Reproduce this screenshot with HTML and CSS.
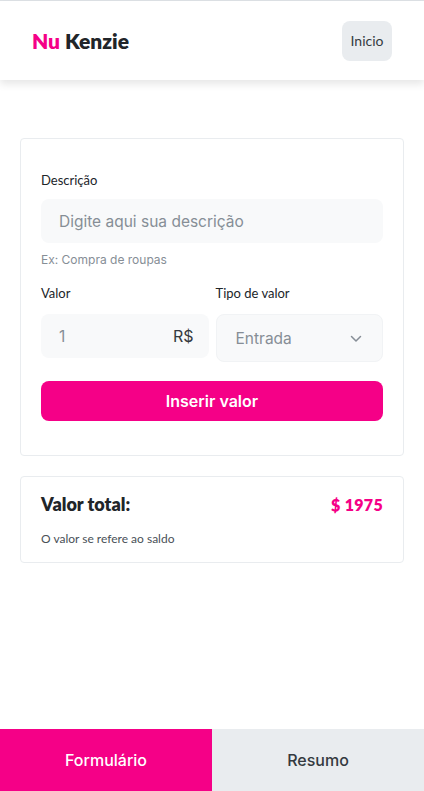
FILE: index.html
```html
<!DOCTYPE html>
<html lang="pt-BR">
<head>
<meta charset="utf-8">
<title>Nu Kenzie</title>
<link rel="stylesheet" href="styles.css">
</head>
<body>
<div class="page">
  <header class="header">
    <h1 class="logo"><span class="logo-nu">Nu</span> Kenzie</h1>
    <button class="btn-home">Inicio</button>
  </header>
  <main class="main">
    <form class="card form-card">
      <label class="label" for="desc">Descrição</label>
      <div class="field"><span class="placeholder">Digite aqui sua descrição</span></div>
      <p class="helper">Ex: Compra de roupas</p>
      <div class="row">
        <div class="col">
          <label class="label">Valor</label>
          <div class="field field-value"><span class="placeholder">1</span><span class="currency">R$</span></div>
        </div>
        <div class="col">
          <label class="label">Tipo de valor</label>
          <div class="field field-select"><span class="placeholder">Entrada</span>
            <svg class="chev" width="12" height="8" viewBox="0 0 12 8"><path d="M1.5 1.5 6 6l4.5-4.5" fill="none" stroke="#868e96" stroke-width="1.5" stroke-linecap="round" stroke-linejoin="round"/></svg>
          </div>
        </div>
      </div>
      <button type="button" class="btn-submit">Inserir valor</button>
    </form>
    <section class="card total-card">
      <div class="total-top">
        <h2 class="total-title">Valor total:</h2>
        <span class="total-value">$ 1975</span>
      </div>
      <p class="total-note">O valor se refere ao saldo</p>
    </section>
  </main>
  <nav class="tabs">
    <button class="tab tab-active">Formulário</button>
    <button class="tab">Resumo</button>
  </nav>
</div>
</body>
</html>
```
FILE: styles.css
```css
* { box-sizing: border-box; }
html, body { margin: 0; padding: 0; }
body { background: #fff; font-family: Inter, "Noto Sans", sans-serif; color: #212529; }
.page { width: 424px; height: 791px; position: relative; border-top: 1px solid #dee2e6; display: flex; flex-direction: column; }
.header { height: 79px; display: flex; align-items: center; justify-content: space-between; padding: 0 32px; box-shadow: 0 4px 8px rgba(0,0,0,0.1); background: #fff; }
.logo { margin: 0; font-family: Lato, "Noto Sans", sans-serif; font-weight: 800; font-size: 21px; color: #212529; letter-spacing: 0; }
.logo-nu { color: #f50087; }
.btn-home { width: 50px; height: 40px; border: none; border-radius: 8px; background: #e9ecef; font-family: Lato, sans-serif; font-size: 14px; color: #343a40; padding: 0; }
.main { padding: 58px 20px 0; display: flex; flex-direction: column; gap: 20px; flex: 1; }
.card { border: 1px solid #e9ecef; border-radius: 4px; background: #fff; }
.form-card { padding: 33px 20px 34px; display: flex; flex-direction: column; }
.label { font-family: Lato, sans-serif; font-size: 13px; color: #212529; display: block; height: 17px; line-height: 17px; }
.field { margin-top: 10px; height: 44px; border-radius: 8px; background: #f8f9fa; display: flex; align-items: center; padding: 0 18px; }
.placeholder { font-size: 15.5px; color: #868e96; }
.helper { margin: 10px 0 0; font-size: 12px; color: #868e96; height: 14px; line-height: 14px; }
.row { display: flex; gap: 7px; margin-top: 18px; }
.col { flex: 1; display: flex; flex-direction: column; }
.field-value { margin-top: 12px; justify-content: space-between; padding: 0 15px 0 18px; height: 44px; }
.currency { font-size: 16px; color: #343a40; }
.field-select { margin-top: 12px; height: 48px; padding: 0 20px 0 19px; justify-content: space-between; border: 1px solid #f1f3f5; }
.chev { margin-top: 2px; }
.btn-submit { margin-top: 19px; height: 40px; border: none; border-radius: 8px; background: #f50087; color: #fff; font-family: Inter, sans-serif; font-weight: 600; font-size: 16px; }
.total-card { padding: 16px 20px 16px; }
.total-top { display: flex; justify-content: space-between; align-items: center; height: 22px; }
.total-title { margin: 0; font-family: Lato, sans-serif; font-weight: 800; font-size: 18px; color: #212529; }
.total-value { font-family: Lato, sans-serif; font-weight: 800; font-size: 16px; letter-spacing: 0.3px; color: #f50087; }
.total-note { margin: 16px 0 0; font-family: Lato, sans-serif; font-size: 12px; color: #495057; }
.tabs { display: flex; height: 62px; }
.tab { flex: 1; border: none; font-family: Inter, sans-serif; font-weight: 500; font-size: 16px; background: #e9ecef; color: #343a40; }
.tab-active { background: #f50087; color: #fff; }
```
